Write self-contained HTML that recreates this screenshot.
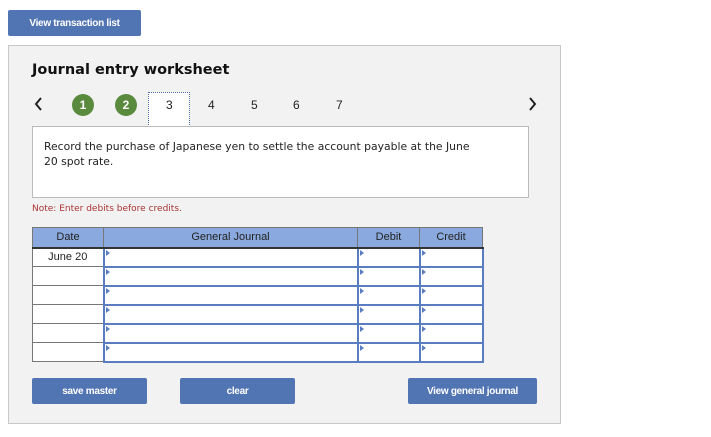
<!DOCTYPE html>
<html><head><style>
*{box-sizing:border-box;margin:0;padding:0}
body{width:711px;height:437px;background:#fff;font-family:"Liberation Sans",Arial,sans-serif;position:relative;overflow:hidden}
.a{position:absolute}
.btn{position:absolute;background:#5174b3;color:#fff;font-weight:bold;font-size:10px;border-radius:2px;display:flex;align-items:center;justify-content:center;letter-spacing:-0.3px}
.panel{left:8px;top:45px;width:553px;height:379px;background:#f2f2f2;border:1px solid #c8c8c8}
.nav{position:absolute;top:98px;font-size:12px;color:#222}
.circ{position:absolute;top:94px;width:22px;height:22px;border-radius:50%;background:#5a8a3e;color:#fff;font-size:12px;font-weight:bold;display:flex;align-items:center;justify-content:center}
table{position:absolute;left:32px;top:227px;border-collapse:collapse}
td,th{border:1px solid #777;font-size:11px;font-weight:normal;height:19px;padding:0;color:#222}
th{background:#8aaadf;height:20px;border-bottom:2px solid #333}
td{background:#fff}
td.i{border:2px solid #5a7cc0;position:relative}
td.i:before{content:"";position:absolute;left:1px;top:1px;border-left:4px solid #5a7cc0;border-top:3px solid transparent;border-bottom:3px solid transparent}
</style></head><body>
<div class="btn" style="left:8px;top:10px;width:133px;height:26px">View transaction list</div>
<div class="a panel"></div>
<div class="a" style="left:32px;top:62px;font-size:14.5px;font-weight:bold;font-family:'DejaVu Sans',sans-serif;color:#111">Journal entry worksheet</div>
<svg class="a" style="left:34px;top:97px" width="10" height="14"><path d="M7 1 L2 7 L7 13" stroke="#222" stroke-width="2" fill="none"/></svg>
<svg class="a" style="left:527px;top:97px" width="10" height="14"><path d="M3 1 L8 7 L3 13" stroke="#222" stroke-width="2" fill="none"/></svg>
<div class="circ" style="left:72px">1</div>
<div class="circ" style="left:115px">2</div>
<div class="a" style="left:148px;top:92px;width:42px;height:35px;background:#fff;border:1px dotted #4a6aa8"></div>
<div class="nav" style="left:166px">3</div>
<div class="nav" style="left:208px">4</div>
<div class="nav" style="left:251px">5</div>
<div class="nav" style="left:293px">6</div>
<div class="nav" style="left:336px">7</div>
<div class="a" style="left:32px;top:126px;width:497px;height:72px;background:#fff;border:1px solid #bbb;padding:12px 11px;font-family:'DejaVu Sans',sans-serif;font-size:10.8px;line-height:15px;color:#222;white-space:nowrap">Record the purchase of Japanese yen to settle the account payable at the June<br>20 spot rate.</div>
<div class="a" style="left:32px;top:204px;font-family:'DejaVu Sans',sans-serif;font-size:9px;color:#a33">Note: Enter debits before credits.</div>
<table>
<tr><th style="width:71px">Date</th><th style="width:254px">General Journal</th><th style="width:62px">Debit</th><th style="width:63px">Credit</th></tr>
<tr><td style="text-align:center">June 20</td><td class="i"></td><td class="i"></td><td class="i"></td></tr>
<tr><td></td><td class="i"></td><td class="i"></td><td class="i"></td></tr>
<tr><td></td><td class="i"></td><td class="i"></td><td class="i"></td></tr>
<tr><td></td><td class="i"></td><td class="i"></td><td class="i"></td></tr>
<tr><td></td><td class="i"></td><td class="i"></td><td class="i"></td></tr>
<tr><td></td><td class="i"></td><td class="i"></td><td class="i"></td></tr>
</table>
<div class="btn" style="left:32px;top:378px;width:115px;height:26px">save master</div>
<div class="btn" style="left:180px;top:378px;width:115px;height:26px">clear</div>
<div class="btn" style="left:408px;top:378px;width:129px;height:26px">View general journal</div>
</body></html>
